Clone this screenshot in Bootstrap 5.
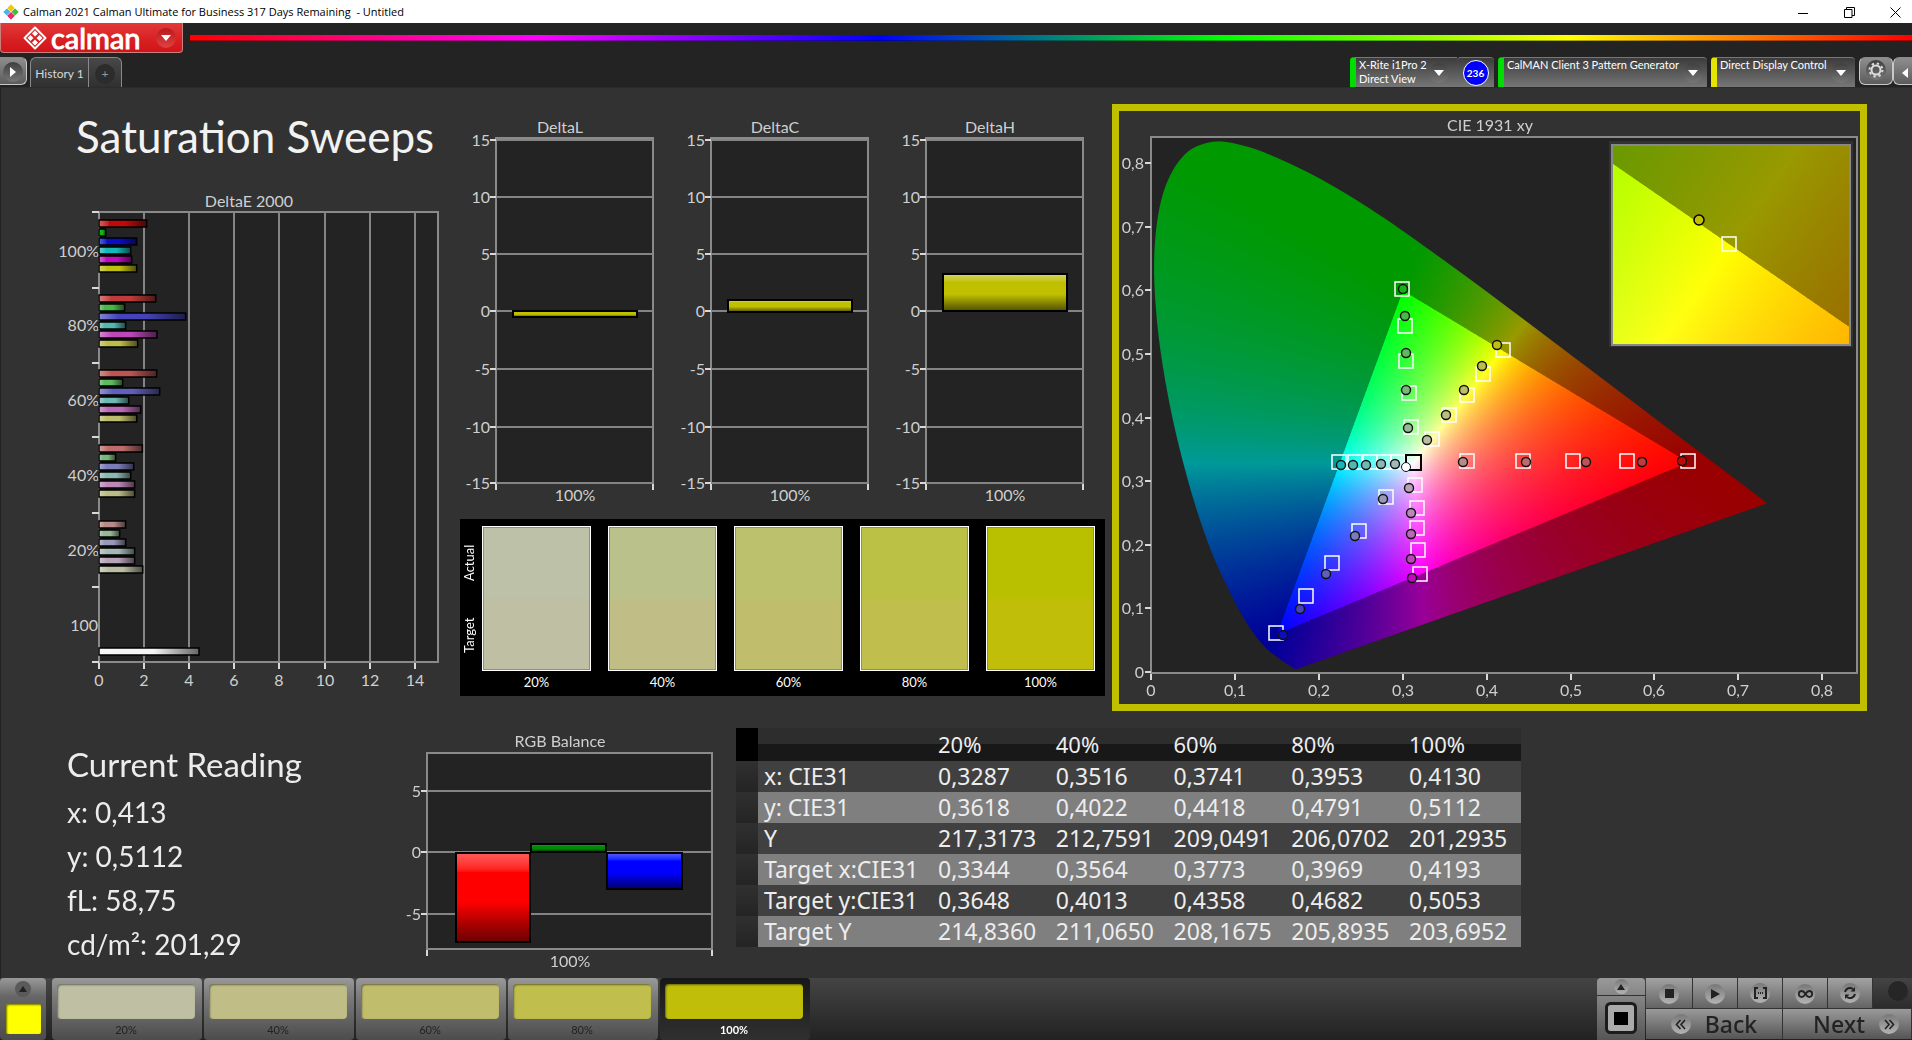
<!DOCTYPE html>
<html lang="en">
<head>
<meta charset="utf-8">
<meta name="viewport" content="width=device-width, initial-scale=1">
<title>Calman 2021 Calman Ultimate for Business</title>
<link href="https://cdn.jsdelivr.net/npm/bootstrap@5.3.0/dist/css/bootstrap.min.css" rel="stylesheet">
<style>
body { font-family: Lato, "Liberation Sans", sans-serif; background: #323232; color: #ececec; overflow-x: hidden; line-height: 1.2; }
button { font-family: inherit; }
.titlebar { height: 23px; background: #fff; color: #000; font: 11px/18px "Open Sans", "Noto Sans", sans-serif; padding-left: 3px; }
.win-btn { width: 46px; height: 22px; border: 0; background: none; padding: 0; }
.toolzone { background: #232323; height: 65px; border-bottom: 1px solid #2b2b2b; }
.brand { width: 183px; height: 30px; border: 1px solid #c9807e; border-top: 0; border-radius: 0 0 4px 4px; background: linear-gradient(#e03a3a, #d81f22 60%, #d01518); color: #fff; padding: 0 6px 0 22px; }
.brand-name { -webkit-text-stroke: 1px #fff; font-size: 29px; line-height: 26px; }
.spectrum { height: 6px; margin: 12px 0 0 7px; background: linear-gradient(90deg, #f00, #f0f 20%, #00f 40%, #0f0 60%, #ff0 80%, #f00); border-bottom: 1px solid #0005; }
.round { border-radius: 50%; width: 20px; height: 20px; background: linear-gradient(#3f3f3f, #777); display: inline-flex; align-items: center; justify-content: center; flex: none; }
.brand .round { background: linear-gradient(#b81a1c, #e04040); }
.sq-btn { height: 28px; border: 1px solid #c8c8c8; border-top-color: #8a8a8a; background: linear-gradient(#8e8e8e, #5c5c5c); padding: 0; }
.htab { height: 30px; border: 1px solid #8a8a8a; border-bottom: 0; background: linear-gradient(#484848, #303030); color: #d8d8d8; font-size: 12px; padding: 3px 0 0; }
.device { height: 30px; border: 0; border-top: 1px solid #777; border-radius: 4px 4px 0 0; background: linear-gradient(#3c3c3c, #767676); color: #fff; font-size: 11px; line-height: 14px; text-align: left; padding: 0 4px 0 3px; border-left: 6px solid #0d0; white-space: nowrap; }
.device.warn { border-left-color: #e5e500; }
.count { width: 26px; height: 26px; border-radius: 50%; background: #00f; border: 1px solid #fff; color: #fff; font: 700 10px/24px Lato, sans-serif; text-align: center; }
.stage { border-left: 1px solid #222; }
.top-grid { display: grid; grid-template-columns: minmax(0, 459fr) minmax(0, 645fr) 7px minmax(0, 755fr) minmax(0, 45fr); }
.bottom-grid { display: grid; grid-template-columns: minmax(0, 394fr) minmax(0, 341fr) minmax(0, 785fr) minmax(0, 391fr); padding-top: 17px; }
.sheet-title { font-size: 44px; line-height: 54px; padding: 21px 0 27px 75px; margin: 0; font-weight: 400; color: #f2f2f2; }
.chart { display: block; width: 100%; height: auto; }
.chart text { fill: #cfcfcf; font-size: 16px; }
.minis { padding-top: 24px; }
.swatches { background: #000; height: 177px; padding: 7px 10px 0 2px; }
.side { writing-mode: vertical-rl; transform: rotate(180deg); width: 14px; height: 145px; margin-right: 6px; font-size: 13px; line-height: 14px; color: #fff; }
.sw-col { flex: 1 1 0; min-width: 0; }
.sw { border: 1px solid #fff; height: 145px; box-shadow: inset 0 0 0 1px #777a; }
.sw-cap { font-size: 13px; line-height: 22px; color: #fff; text-align: center; }
.cie { border: 7px solid #c0c000; margin-top: 16px; display: grid; }
.cie > * { grid-area: 1 / 1; width: 100%; height: auto; display: block; }
.reading { padding: 17px 0 0 66px; }
.reading h2 { font-size: 33px; line-height: 38px; font-weight: 400; margin: 0 0 7px; }
.reading p { font-size: 28px; line-height: 44px; margin: 0; }
.readout { width: 100%; font: 23px/31px "Noto Sans", "Open Sans", sans-serif; color: #ededed; table-layout: fixed; border-collapse: collapse; }
.readout th { font-weight: 400; padding: 0; white-space: nowrap; }
.readout td { padding: 0; white-space: nowrap; }
.readout thead th { height: 33px; font-size: 22px; background: linear-gradient(#2d2d2d 50%, #181818 50%); }
.readout thead th:first-child { background: #000; }
.readout tbody tr { height: 31px; background: #404040; }
.readout tbody tr:nth-child(even) { background: #7f7f7f; }
.readout tbody td:first-child { background: linear-gradient(#303030, #242424); }
.readout tbody th { padding-left: 6px; }
.dock { height: 62px; background: linear-gradient(#444, #222); }
.palette-btn { width: 46px; border: 0; border-radius: 4px; background: linear-gradient(#999, #666 30%, #4c4c4c); padding: 3px 0 6px; margin-right: 6px; }
.palette-btn i { width: 35px; height: 30px; background: #ff0; border-radius: 2px; box-shadow: inset 1px 1px 2px #0008; }
.step { width: 150px; border: 0; border-radius: 4px; background: linear-gradient(#999, #7b7b7b 30%, #4c4c4c); padding: 6px 7px 0 5px; color: #222; font-size: 11px; line-height: 22px; }
.step i { display: block; height: 35px; border-radius: 4px; box-shadow: inset 1px 1px 2px #0007; }
.step.active { background: linear-gradient(#181818, #303030); color: #fff; font-weight: 700; }
.ctl { border: 0; border-right: 1px solid #333; background: linear-gradient(#a2a2a2, #646464); padding: 0; height: 30px; }
.ctl .round, .nav-btn .round, .source .round { background: linear-gradient(#777, #b4b4b4); }
.ctl:disabled { background: linear-gradient(#444, #2c2c2c); }
.ctl:disabled .round { background: #262626; }
.transport { width: 266px; }
.nav-btn { border: 0; border-right: 1px solid #333; background: linear-gradient(#9a9a9a, #555); color: #222; font: 500 23px/30px "Noto Sans", sans-serif; height: 30px; padding: 0; gap: 14px; }
.source { width: 48px; border-radius: 4px 4px 0 0; background: linear-gradient(#999, #555); margin-right: 1px; }
.source button { border: 0; background: none; padding: 0; width: 48px; }
.source .source-up { height: 18px; border-bottom: 1px solid #333; display: flex; align-items: center; justify-content: center; }
.source .round { width: 15px; height: 15px; }
</style>
</head>
<body class="d-flex flex-column min-vh-100">

<header>
  <div class="titlebar d-flex align-items-center">
    <svg width="16" height="16" viewBox="0 0 16 16" class="me-1"><g stroke="#fff" stroke-width=".6"><path d="M8 0l4.200 4.200L8 8.400 3.800 4.200z" fill="#f5c90a"/><path d="M4 4l4 4-4 4-4-4z" fill="#4ab5e6"/><path d="M12 4l4 4-4 4-4-4z" fill="#3cc13b"/><path d="M8 7.600l4.200 4.200L8 16l-4.200-4.200z" fill="#ee2a6b"/></g></svg>
    <span>Calman 2021 Calman Ultimate for Business 317 Days Remaining &nbsp;- Untitled</span>
    <div class="ms-auto d-flex" style="margin-right:-6px">
      <button class="win-btn" aria-label="Minimize"><svg width="10" height="10"><path d="M0 5.500h10" stroke="#000"/></svg></button>
      <button class="win-btn" aria-label="Restore"><svg width="11" height="11" fill="none" stroke="#000"><path d="M.5 2.500h7.500v8H.5zM2.500 2.500v-2h8v8H8"/></svg></button>
      <button class="win-btn" aria-label="Close"><svg width="11" height="11" stroke="#000"><path d="M.5.5l10 10M10.500.5l-10 10"/></svg></button>
    </div>
  </div>
  <div class="toolzone d-flex flex-column justify-content-between">
    <div class="d-flex">
      <button class="brand d-flex align-items-center">
        <svg width="24" height="24" viewBox="0 0 24 24" class="me-1"><path d="M12 1.500L22.500 12 12 22.500 1.500 12z" fill="none" stroke="#fff" stroke-width="2" stroke-linejoin="round"/><g fill="#fff"><path d="M12 4.500l3 3-3 3-3-3zM7.500 9l3 3-3 3-3-3zM16.500 9l3 3-3 3-3-3zM12 13.500l3 3-3 3-3-3z"/></g></svg>
        <span class="brand-name">calman</span>
        <span class="round ms-auto"><svg width="10" height="6"><path d="M0 0h10L5 6z" fill="#fff"/></svg></span>
      </button>
      <div class="spectrum flex-grow-1"></div>
    </div>
    <div class="d-flex">
      <button class="sq-btn border-start-0 rounded-end" style="width:27px" aria-label="Expand"><span class="round"><svg width="6" height="10"><path d="M0 0l6 5-6 5z" fill="#fff"/></svg></span></button>
      <div class="d-flex ps-1" style="margin-left:-1px">
        <button class="htab rounded-top border-end-0 rounded-end-0" style="width:58px">History 1</button>
        <button class="htab rounded-top rounded-start-0" style="width:34px" aria-label="Add history"><span class="round" style="background:#2c2c2c;color:#999">+</span></button>
      </div>
      <div class="d-flex ms-auto">
        <button class="device d-flex rounded-end-0" style="width:107px"><span>X-Rite i1Pro 2<br>Direct View</span><span class="round ms-auto me-1 align-self-center"><svg width="10" height="6"><path d="M0 0h10L5 6z" fill="#fff"/></svg></span></button>
        <div class="device border-start-0 px-0 d-flex align-items-center justify-content-center" style="width:37px"><span class="count">236</span></div>
        <button class="device d-flex ms-1" style="width:209px"><span>CalMAN Client 3 Pattern Generator</span><span class="round ms-auto align-self-center"><svg width="10" height="6"><path d="M0 0h10L5 6z" fill="#fff"/></svg></span></button>
        <button class="device warn d-flex ms-1" style="width:144px"><span>Direct Display Control</span><span class="round ms-auto align-self-center"><svg width="10" height="6"><path d="M0 0h10L5 6z" fill="#fff"/></svg></span></button>
        <button class="sq-btn rounded ms-1" style="width:34px" aria-label="Settings"><span class="round"><svg width="16" height="16" viewBox="-8 -8 16 16" fill="none" stroke="#ddd"><circle r="4.500" stroke-width="2"/><circle r="6.500" stroke-width="2" stroke-dasharray="2.300 2.800"/></svg></span></button>
        <button class="sq-btn rounded-start border-end-0 text-end" style="width:19px" aria-label="Collapse"><svg width="6" height="10" class="me-1"><path d="M6 0L0 5l6 5z" fill="#fff"/></svg></button>
      </div>
    </div>
  </div>
</header>

<main class="stage flex-grow-1">
  <div class="top-grid">
    <section>
      <h1 class="sheet-title">Saturation Sweeps</h1>
      <svg class="chart" id="deltaE" viewBox="1 190 459 510"></svg>
    </section>
    <section>
      <div class="minis row row-cols-3 g-0">
        <div class="col"><svg class="chart" id="deltaL" viewBox="0 0 215 407"></svg></div>
        <div class="col"><svg class="chart" id="deltaC" viewBox="0 0 215 407"></svg></div>
        <div class="col"><svg class="chart" id="deltaH" viewBox="0 0 215 407"></svg></div>
      </div>
      <div class="swatches d-flex">
        <div class="side d-flex justify-content-around flex-row"><span>Target</span><span>Actual</span></div>
        <div class="d-flex flex-grow-1" id="swatches" style="gap:17px"></div>
      </div>
    </section>
    <div></div>
    <section class="cie">
      <canvas id="gamut" width="1482" height="1186"></canvas>
      <svg id="cieChart" class="chart" viewBox="0 0 741 593"></svg>
    </section>
    <div></div>
  </div>

  <div class="bottom-grid">
    <section class="reading">
      <h2>Current Reading</h2>
      <p>x: 0,413</p>
      <p>y: 0,5112</p>
      <p>fL: 58,75</p>
      <p>cd/m²: 201,29</p>
    </section>
    <section><svg class="chart" id="rgb" viewBox="395 728 341 245"></svg></section>
    <section>
      <table class="readout">
        <colgroup><col style="width:22px"><col style="width:180px"><col><col><col><col><col style="width:112px"></colgroup>
        <thead><tr><th></th><th></th><th scope="col">20%</th><th scope="col">40%</th><th scope="col">60%</th><th scope="col">80%</th><th scope="col">100%</th></tr></thead>
        <tbody>
          <tr><td></td><th scope="row">x: CIE31</th><td>0,3287</td><td>0,3516</td><td>0,3741</td><td>0,3953</td><td>0,4130</td></tr>
          <tr><td></td><th scope="row">y: CIE31</th><td>0,3618</td><td>0,4022</td><td>0,4418</td><td>0,4791</td><td>0,5112</td></tr>
          <tr><td></td><th scope="row">Y</th><td>217,3173</td><td>212,7591</td><td>209,0491</td><td>206,0702</td><td>201,2935</td></tr>
          <tr><td></td><th scope="row">Target x:CIE31</th><td>0,3344</td><td>0,3564</td><td>0,3773</td><td>0,3969</td><td>0,4193</td></tr>
          <tr><td></td><th scope="row">Target y:CIE31</th><td>0,3648</td><td>0,4013</td><td>0,4358</td><td>0,4682</td><td>0,5053</td></tr>
          <tr><td></td><th scope="row">Target Y</th><td>214,8360</td><td>211,0650</td><td>208,1675</td><td>205,8935</td><td>203,6952</td></tr>
        </tbody>
      </table>
    </section>
  </div>
</main>

<footer class="dock d-flex">
  <button class="palette-btn d-flex flex-column align-items-center justify-content-between" aria-label="Palette"><span class="round" style="width:16px;height:16px;background:#5a5a5a"><svg width="8" height="6"><path d="M0 6h8L4 0z" fill="#222"/></svg></span><i></i></button>
  <div class="d-flex" id="steps" style="gap:2px"></div>
  <div class="d-flex ms-auto">
    <div class="source d-flex flex-column">
      <button class="source-up" aria-label="More"><span class="round"><svg width="8" height="6"><path d="M0 6h8L4 0z" fill="#222"/></svg></span></button>
      <button class="flex-grow-1" aria-label="Pattern window"><svg width="32" height="32"><rect x="1.500" y="1.500" width="29" height="29" rx="4" fill="#aaa" stroke="#1c1c1c" stroke-width="3"/><rect x="9" y="10" width="14" height="13" fill="#000"/></svg></button>
    </div>
    <div class="transport">
      <div class="d-flex">
        <button class="ctl" style="width:47px" aria-label="Stop"><span class="round"><svg width="9" height="9"><path d="M0 0h9v9H0z" fill="#222"/></svg></span></button>
        <button class="ctl" style="width:45px" aria-label="Play"><span class="round"><svg width="9" height="10"><path d="M0 0l9 5-9 5z" fill="#222"/></svg></span></button>
        <button class="ctl" style="width:45px" aria-label="Read series"><span class="round"><svg width="13" height="12" fill="none" stroke="#222" stroke-width="2"><path d="M4 1H1v10h3M9 1h3v10H9"/><path d="M4 6h5" stroke-dasharray="1 1"/></svg></span></button>
        <button class="ctl" style="width:45px" aria-label="Continuous"><span class="round"><svg width="15" height="8" fill="none" stroke="#222" stroke-width="1.800"><path d="M7.500 4C6 1.500 5 1 3.800 1a3 3 0 000 6C5 7 6 6.500 7.500 4s2.500-3 3.700-3a3 3 0 010 6C10 7 9 6.500 7.500 4z"/></svg></span></button>
        <button class="ctl" style="width:45px" aria-label="Repeat"><span class="round"><svg width="14" height="14" viewBox="0 0 14 14" fill="none" stroke="#222" stroke-width="2"><path d="M2 6a5 5 0 018-3M12 8a5 5 0 01-8 3"/><path d="M12 1v4.500H7.500zM2 13V8.500h4.500z" fill="#222" stroke="none"/></svg></span></button>
        <button class="ctl flex-grow-1 border-end-0 text-end pe-1" disabled aria-label="Record"><span class="round"></span></button>
      </div>
      <div class="d-flex" style="margin-top:1px">
        <button class="nav-btn d-flex align-items-center justify-content-center" style="width:137px"><span class="round"><svg width="11" height="11" fill="none" stroke="#222" stroke-width="1.600"><path d="M5.500 1L1.500 5.500l4 4.500M10 1L6 5.500l4 4.500"/></svg></span>Back</button>
        <button class="nav-btn flex-grow-1 d-flex align-items-center justify-content-end pe-2"><span>Next</span><span class="round me-1"><svg width="11" height="11" fill="none" stroke="#222" stroke-width="1.600"><path d="M1 1l4 4.500L1 10M5.500 1l4 4.500-4 4.500"/></svg></span></button>
      </div>
    </div>
  </div>
</footer>

<script src="https://cdn.jsdelivr.net/npm/bootstrap@5.3.0/dist/js/bootstrap.bundle.min.js"></script>
<script>
const line = (x1, y1, x2, y2, c = '#848484', w = 1) => `<path d="M${x1} ${y1}L${x2} ${y2}" stroke="${c}" stroke-width="${w}" fill="none" shape-rendering="crispEdges"/>`;
const label = (x, y, t, a = 'middle') => `<text x="${x}" y="${y}" text-anchor="${a}">${t}</text>`;
const frame = (x, y, w, h) => `<rect x="${x}" y="${y}" width="${w}" height="${h}" fill="#232323" stroke="#8a8a8a" shape-rendering="crispEdges" stroke-width="2"/>`;
const put = (id, s) => document.getElementById(id).innerHTML = s;
const TICK = '#d8d8d8';
const shade = (id, c, across) => `<linearGradient id="${id}" x2="${across ? 1 : 0}" y2="${across ? 0 : 1}"><stop offset="0" stop-color="color-mix(in srgb, ${c} 65%, #fff)"/><stop offset=".22" stop-color="${c}"/><stop offset=".55" stop-color="${c}"/><stop offset="1" stop-color="color-mix(in srgb, ${c} 42%, #000)"/></linearGradient>`;
const bar = (id, c, x, y, w, h, across) => shade(id, c, across) + `<rect x="${x}" y="${y}" width="${w}" height="${h}" fill="url(#${id})" stroke="#000" stroke-width="${across ? 1.500 : 2}"/>`;

/* DeltaE 2000 */
const tones = {
  100: ['#c00a0a', '#14b414', '#0c0cc0', '#14b8b8', '#c00ac0', '#c0c010'],
  80: ['#c03c3c', '#46b946', '#4444b8', '#52b8b0', '#bc48b8', '#bcbc48'],
  60: ['#bc5454', '#60b860', '#6060bc', '#70b8b4', '#bc68b8', '#bcbc6a'],
  40: ['#bc6c6c', '#78b878', '#7c7cb8', '#8cb8b4', '#bc88b8', '#bcbc86'],
  20: ['#b88a8a', '#98b898', '#9898b8', '#a4b8b6', '#b8a2b8', '#bcbca4']
};
const ends = {
  100: [260, 137, 230, 212, 215, 230], 80: [287, 194, 377, 197, 291, 233],
  60: [290, 188, 299, 206, 242, 230], 40: [247, 167, 221, 212, 224, 224], 20: [197, 179, 197, 224, 224, 248]
};
let s = frame(99, 212, 339, 450) + label(249, 207, 'DeltaE 2000');
[0, 2, 4, 6, 8, 10, 12, 14].forEach(v => {
  const x = Math.round(99 + v * 22.55);
  if (v) s += line(x, 212, x, 662, '#848484', 2);
  s += line(x, 663, x, 669, TICK, 2) + label(x, 686, v);
});
[212, 288, 363, 437, 513, 587, 662].forEach(y => s += line(92, y, 99, y, TICK, 2));
[100, 80, 60, 40, 20].forEach((g, i) => {
  s += label(99, [257, 331, 406, 481, 556][i], g + '%', 'end');
  ends[g].forEach((e, k) => s += bar('e' + g + k, tones[g][k], 99, [220, 295, 370, 445, 521][i] + k * 9, (e - 117) / 3, 7, true));
});
s += label(98, 631, '100', 'end') + bar('ew', '#f4f4f4', 99, 648, 100, 7, true);
put('deltaE', s);

/* DeltaL, DeltaC, DeltaH */
[['L', 199, 6], ['C', 188, 12], ['H', 162, 37]].forEach(([n, y, h]) => {
  let t = label(100, 21, 'Delta' + n) + frame(36, 26, 157, 345);
  [15, 10, 5, 0, -5, -10, -15].forEach((v, i) => {
    const gy = [28, 85, 142, 199, 257, 315, 371][i];
    t += line(36, gy, 193, gy, '#848484', 2) + line(30, gy, 36, gy, TICK, 2) + label(30, gy + 6, v, 'end');
  });
  t += line(36, 372, 36, 378, TICK, 2) + line(193, 372, 193, 378, TICK, 2) + label(115, 389, '100%');
  put('delta' + n, t + bar('d' + n, '#c0c000', 53, y, 124, h));
});

/* RGB balance */
s = label(560, 747, 'RGB Balance') + frame(427, 753, 285, 196);
[[791, 5], [852, 0], [914, -5]].forEach(([y, v]) => s += line(427, y, 712, y, '#848484', 2) + line(421, y, 427, y, TICK, 2) + label(421, y + 6, v, 'end'));
s += line(427, 950, 427, 956, TICK, 2) + line(712, 950, 712, 956, TICK, 2) + label(570, 967, '100%');
s += bar('br', '#f00', 456, 853, 74, 89) + bar('bg', '#008a08', 531, 844, 75, 8) + bar('bb', '#00f', 607, 853, 75, 36);
put('rgb', s);

/* saturation swatches and step buttons */
const actual = ['#bcc1a8', '#bbc18a', '#bbc16c', '#bbc144', '#b8c000'];
const target = ['#bfbfa4', '#c0be86', '#c0be6c', '#c0be4c', '#c0be08'];
const pct = ['20%', '40%', '60%', '80%', '100%'];
put('swatches', pct.map((p, i) => `<div class="sw-col"><div class="sw" style="background:linear-gradient(${actual[i]} 48%,${target[i]} 52%)"></div><div class="sw-cap">${p}</div></div>`).join(''));
put('steps', pct.map((p, i) => `<button class="step${i == 4 ? ' active' : ''}"><i style="background:${target[i]}"></i>${p}</button>`).join(''));

/* CIE 1931 chart */
const X0 = 32, Y0 = 561, SX = 839, SY = 636;
const px = x => X0 + x * SX, py = y => Y0 - y * SY;
const locus = [[.1741,.005],[.1714,.0051],[.1689,.0069],[.1644,.0109],[.1566,.0177],[.144,.0297],[.1355,.0399],[.1241,.0578],[.1096,.0868],[.0913,.1327],[.0687,.2007],[.0454,.295],[.0235,.4127],[.0082,.5384],[.0039,.6548],[.0139,.7502],[.0389,.812],[.0743,.8338],[.1142,.8262],[.1547,.8059],[.1929,.7816],[.2296,.7543],[.2658,.7243],[.3016,.6923],[.3731,.6245],[.4441,.5547],[.5125,.4866],[.5752,.4242],[.627,.3725],[.6658,.334],[.6915,.3083],[.719,.2809],[.7347,.2653]];
function tint(x, y) {
  y = Math.max(y, .0001);
  const X = x / y, Z = (1 - x - y) / y;
  const r = 3.2406 * X - 1.5372 - .4986 * Z, g = -.9689 * X + 1.8758 + .0415 * Z, b = .0557 * X - .204 + 1.057 * Z;
  const k = r < 0 || g < 0 || b < 0 ? 153 : 255, m = Math.max(r, g, b);
  return [r, g, b].map(v => k * Math.max(v, 0) / m);
}
function field(w, h, toXY) {
  const c = document.createElement('canvas'); c.width = w; c.height = h;
  const q = c.getContext('2d'), im = q.createImageData(w, h);
  for (let j = 0, o = 0; j < h; j++) for (let i = 0; i < w; i++, o += 4) {
    const t = tint(...toXY(i / 2, j / 2));
    im.data[o] = t[0]; im.data[o + 1] = t[1]; im.data[o + 2] = t[2]; im.data[o + 3] = 255;
  }
  q.putImageData(im, 0, 0);
  return c;
}
const ctx = document.getElementById('gamut').getContext('2d');
ctx.fillStyle = '#232323'; ctx.fillRect(64, 52, 1412, 1072);
ctx.save(); ctx.beginPath();
const P = locus.map(([x, y]) => [2 * px(x), 2 * py(y)]);
ctx.moveTo(...P[0]);
for (let i = 0; i < P.length - 1; i++) {
  const a = P[Math.max(i - 1, 0)], b = P[i], c = P[i + 1], d = P[Math.min(i + 2, P.length - 1)];
  ctx.bezierCurveTo(b[0] + (c[0] - a[0]) / 6, b[1] + (c[1] - a[1]) / 6, c[0] - (d[0] - b[0]) / 6, c[1] - (d[1] - b[1]) / 6, c[0], c[1]);
}
ctx.closePath(); ctx.clip();
ctx.drawImage(field(1482, 1186, (i, j) => [(i - X0) / SX, (Y0 - j) / SY]), 0, 0);
ctx.restore();
ctx.fillStyle = '#323232'; ctx.fillRect(980, 60, 488, 412);
ctx.drawImage(field(476, 400, (i, j) => [.4193 + (i - 118) / 4683, .5053 - (j - 100) / 4068]), 986, 67);

s = `<rect x="32" y="26" width="706" height="536" fill="none" stroke="#8a8a8a" stroke-width="2"/><rect x="493" y="34" width="238" height="200" fill="none" stroke="#888" stroke-width="2"/>` + label(371, 20, 'CIE 1931 xy');
for (let i = 0; i < 9; i++) {
  const t = i ? '0,' + i : '0', x = Math.round(px(i / 10)), y = Math.round(py(i / 10));
  s += line(26, y, 32, y, TICK, 2) + line(x, 563, x, 569, TICK, 2) + label(25, y + 6, t, 'end') + label(x, 585, t);
}
[[283,178],[286,215],[287,250],[290,282],[292,316],[384,239],[364,263],[348,284],[330,304],[313,328],[220,351],[236,351],[251,351],[265,351],[279,351],[348,350],[404,350],[454,350],[508,350],[569,350],[296,374],[298,397],[298,417],[299,439],[301,463],[267,386],[240,420],[213,452],[187,485],[157,522],[610,133]]
  .forEach(([x, y]) => s += `<rect x="${x - 7}" y="${y - 7}" width="14" height="14" fill="none" stroke="#fff" stroke-width="1.500"/>`);
s += '<rect x="287" y="344" width="15" height="15" fill="none" stroke="#000" stroke-width="2"/>';
const dots = [
  [[563,350],[523,351],[467,351],[407,351],[344,351]], [[284,178],[286,205],[287,242],[287,279],[289,317]],
  [[164,524],[181,498],[207,463],[236,425],[264,388]], [[222,354],[234,354],[247,354],[262,353],[276,353]],
  [[293,467],[292,448],[292,423],[292,402],[290,377]], [[378,234],[363,255],[345,279],[327,304],[308,329]]];
dots.forEach((row, k) => row.forEach(([x, y], i) => s += `<circle cx="${x}" cy="${y}" r="4.500" fill="${tones[100 - 20 * i][k]}" stroke="#111" stroke-width="1.400"/>`));
s += '<circle cx="287" cy="356" r="4.500" fill="#fff" stroke="#111"/><circle cx="580" cy="109" r="5" fill="#c0c000" stroke="#000" stroke-width="1.500"/>';
put('cieChart', s);
</script>
</body>
</html>
